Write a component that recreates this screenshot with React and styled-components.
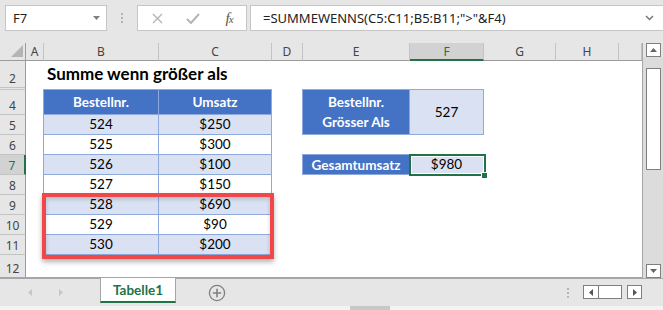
import React from 'react';
import styled, { createGlobalStyle, css } from 'styled-components';

const GREEN = '#217346';
const BLUE = '#4472c4';
const BAND = '#d9e1f2';
const LINE = '#8ea9db';
const CHROME = '#e6e6e6';

const GlobalStyle = createGlobalStyle`
  html, body { margin: 0; padding: 0; }
  body { background: ${CHROME}; font-family: "Noto Sans", sans-serif; }
`;

// grid row n == sheet row n (row 1 is hidden and folded into the header row)
const COLUMNS = ['A', 'B', 'C', 'D', 'E', 'F', 'G', 'H', ''];
const COL_WIDTHS = [26, 18, 115, 113, 31, 107, 74, 72, 63, 23];
const ROW_HEIGHTS = [18, 27, 2, 25, 20, 20, 20, 20, 20, 20, 20, 23];
const ROW_LABELS = [null, '2', '', '4', '5', '6', '7', '8', '9', '10', '11', '12'];

const orders = [
  { no: 524, sum: '$250' },
  { no: 525, sum: '$300' },
  { no: 526, sum: '$100' },
  { no: 527, sum: '$150' },
  { no: 528, sum: '$690' },
  { no: 529, sum: '$90' },
  { no: 530, sum: '$200' },
];

const Page = styled.div`
  width: 663px;
  height: 310px;
  display: flex;
  flex-direction: column;
  background: ${CHROME};
  overflow: hidden;
`;

/* ---------- formula bar ---------- */

const FormulaBar = styled.div`
  display: flex;
  height: 26px;
  margin: 5px 0 12px 5px;
`;

const Box = styled.div`
  box-sizing: border-box;
  background: #fff;
  border: 1px solid #c6c6c6;
  display: flex;
  align-items: center;
`;

const NameBox = styled(Box)`
  width: 102px;
  justify-content: space-between;
  padding: 0 6px 0 7px;
  font-size: 13px;
  color: #222;
`;

const Grip = styled.div`
  width: 30px;
  display: flex;
  flex-direction: column;
  align-items: center;
  justify-content: center;
  gap: 2px;

  i {
    width: 2px;
    height: 2px;
    background: #b4b4b4;
  }
`;

const FxGroup = styled(Box)`
  width: 110px;
  display: grid;
  grid-template-columns: repeat(3, 36px);
  justify-items: center;
  padding-left: 1px;
`;

const FxLabel = styled.span`
  font-family: "Liberation Serif", serif;
  font-style: italic;
  font-size: 15px;
  color: #555;
  letter-spacing: -1px;

  small { font-size: 11px; }
`;

const FormulaInput = styled(Box)`
  flex: 1;
  margin-left: 3px;
  border-right: none;
  justify-content: space-between;
  padding: 0 9px 0 12px;
  font-size: 13px;
  color: #222;
`;

/* ---------- sheet ---------- */

const SheetArea = styled.div`
  display: flex;
  height: 235px;
`;

const Grid = styled.div`
  display: grid;
  grid-template-columns: ${COL_WIDTHS.map(w => `${w}px`).join(' ')};
  grid-template-rows: ${ROW_HEIGHTS.map(h => `${h}px`).join(' ')};
  width: 643px;
  box-sizing: border-box;
  border-right: 1px solid #a6a6a6;
  border-bottom: 1px solid #a6a6a6;
  background: #fff;
  overflow: hidden;
`;

const Corner = styled.div`
  grid-column: 1;
  grid-row: 1;
  background: ${CHROME};
  border-right: 1px solid #9b9b9b;
  border-bottom: 1px solid #9b9b9b;
  display: flex;
  align-items: flex-end;
  justify-content: flex-end;
  padding: 0 2px 3px 0;
`;

const ColHead = styled.div`
  grid-row: 1;
  grid-column: ${p => p.$col};
  box-sizing: border-box;
  display: flex;
  align-items: center;
  justify-content: center;
  font-size: 12px;
  background: ${p => (p.$active ? '#d2d2d2' : CHROME)};
  color: ${p => (p.$active ? GREEN : '#444')};
  border-right: 1px solid #c3c3c3;
  border-bottom: ${p => (p.$active ? `2px solid ${GREEN}` : '1px solid #9b9b9b')};
`;

const RowHead = styled.div`
  grid-column: 1;
  grid-row: ${p => p.$row};
  box-sizing: border-box;
  overflow: hidden;
  display: flex;
  align-items: flex-end;
  justify-content: center;
  font-size: 12px;
  line-height: 16px;
  background: ${p => (p.$active ? '#d2d2d2' : CHROME)};
  color: ${p => (p.$active ? GREEN : '#444')};
  border-bottom: 1px solid #c3c3c3;
  border-right: ${p => (p.$active ? `2px solid ${GREEN}` : '1px solid #9b9b9b')};
`;

const Title = styled.div`
  grid-column: 3 / span 4;
  grid-row: 2;
  display: flex;
  align-items: flex-end;
  padding: 0 0 2px 3px;
  font-family: "Lato", sans-serif;
  font-weight: 700;
  font-size: 17px;
  line-height: 24px;
  color: #000;
`;

const Cell = styled.div`
  grid-column: ${p => p.$col};
  grid-row: ${p => p.$row} / span ${p => p.$rows || 1};
  margin: -1px 0 0 -1px;
  border: 1px solid ${LINE};
  display: flex;
  align-items: ${p => (p.$head ? 'center' : 'flex-end')};
  justify-content: center;
  text-align: center;
  font-family: "Lato", sans-serif;
  font-size: 13.5px;
  line-height: 19px;
  color: #000;
  background: ${p => (p.$head ? BLUE : p.$band ? BAND : '#fff')};
  ${p => p.$head && css`
    color: #fff;
    font-weight: 700;
    line-height: 20px;
  `}
`;

const Highlight = styled.div`
  grid-column: 3 / span 2;
  grid-row: 9 / span 3;
  margin: -2px -2px -4px -2px;
  border: 4px solid #f0474b;
  box-shadow: 0 3px 5px rgba(0, 0, 0, 0.3), inset 0 2px 4px rgba(0, 0, 0, 0.18);
  position: relative;
  z-index: 2;
  pointer-events: none;
`;

const Selection = styled.div`
  grid-column: 7;
  grid-row: 7;
  margin: -1px -2px -1px -1px;
  border: 2px solid ${GREEN};
  box-shadow: inset 0 0 0 1px #fff;
  position: relative;
  z-index: 3;

  &::after {
    content: '';
    position: absolute;
    right: -4px;
    bottom: -5px;
    width: 5px;
    height: 5px;
    background: ${GREEN};
    border: 1px solid #fff;
  }
`;

/* ---------- scroll bars ---------- */

const VScroll = styled.div`
  width: 20px;
  display: flex;
  flex-direction: column;
  background: #dcdcdc;
`;

const ScrollCap = styled.div`
  background: ${CHROME};
  padding: 0 2px 0 3px;
`;

const ScrollBtn = styled.div`
  box-sizing: border-box;
  width: ${p => p.$w || 15}px;
  height: ${p => p.$h || 14}px;
  background: #fff;
  border: 1px solid #7f7f7f;
  display: flex;
  align-items: center;
  justify-content: center;
`;

const VThumb = styled.div`
  box-sizing: border-box;
  height: 102px;
  margin: 11px 2px 0 3px;
  background: #fff;
  border: 1px solid #7f7f7f;
`;

const VTrackFill = styled.div`
  flex: 1;
`;

/* ---------- sheet tabs ---------- */

const TabBar = styled.div`
  display: flex;
  height: 28px;
  box-sizing: border-box;
  border-top: 1px solid #a6a6a6;
`;

const TabNav = styled.div`
  width: 100px;
  display: flex;
  align-items: center;
  padding-left: 27px;
  gap: 25px;
  box-sizing: border-box;
`;

const Tab = styled.div`
  width: 76px;
  margin: -1px 0 3px;
  box-sizing: border-box;
  background: #fff;
  border-left: 1px solid #a6a6a6;
  border-right: 1px solid #a6a6a6;
  border-bottom: 2px solid ${GREEN};
  display: flex;
  align-items: center;
  justify-content: center;
  padding-top: 1px;
  font-family: "Lato", sans-serif;
  font-weight: 700;
  font-size: 13.5px;
  color: ${GREEN};
`;

const AddSheet = styled.div`
  margin-left: 32px;
  display: flex;
  align-items: center;
`;

const Spacer = styled.div`
  flex: 1;
`;

const Dots = styled.div`
  display: flex;
  flex-direction: column;
  justify-content: center;
  gap: 2px;
  margin-right: 14px;

  i {
    width: 2px;
    height: 2px;
    background: #b4b4b4;
  }
`;

const HScroll = styled.div`
  display: flex;
  align-items: center;
  margin-right: 21px;
  padding-bottom: 1px;
`;

const HThumb = styled.div`
  box-sizing: border-box;
  width: 24px;
  height: 14px;
  margin-left: -1px;
  background: #fff;
  border: 1px solid #7f7f7f;
`;

const Footer = styled.div`
  flex: 1;
  background: #f3f3f3;
  display: flex;
  padding-left: 350px;

  i {
    width: 40px;
    background: #c8c8c8;
  }
`;

const Tri = ({ dir, color = '#555', size = 7 }) => {
  const pts = {
    up: '0,5 7,5 3.5,1',
    down: '0,1 7,1 3.5,5',
    left: '5,0 5,7 1,3.5',
    right: '1,0 1,7 5,3.5',
  }[dir];
  const vertical = dir === 'up' || dir === 'down';
  return (
    <svg width={vertical ? size : 6} height={vertical ? 6 : size} viewBox={vertical ? '0 0 7 6' : '0 0 6 7'}>
      <polygon points={pts} fill={color} />
    </svg>
  );
};

const Sheet = () => (
  <Grid>
    <Corner>
      <svg width="12" height="12" viewBox="0 0 12 12">
        <polygon points="12,0 12,12 0,12" fill="#b4b4b4" />
      </svg>
    </Corner>
    {COLUMNS.map((c, i) => (
      <ColHead key={i} $col={i + 2} $active={c === 'F'}>{c}</ColHead>
    ))}
    {ROW_LABELS.map((label, i) =>
      i === 0 ? null : (
        <RowHead key={i} $row={i + 1} $active={label === '7'}>{label}</RowHead>
      )
    )}

    <Title>Summe wenn größer als</Title>

    <Cell $col={3} $row={4} $head>Bestellnr.</Cell>
    <Cell $col={4} $row={4} $head>Umsatz</Cell>
    {orders.map((o, i) => (
      <React.Fragment key={o.no}>
        <Cell $col={3} $row={i + 5} $band={i % 2 === 0}>{o.no}</Cell>
        <Cell $col={4} $row={i + 5} $band={i % 2 === 0}>{o.sum}</Cell>
      </React.Fragment>
    ))}

    <Cell $col={6} $row={4} $rows={2} $head>Bestellnr.<br />Grösser Als</Cell>
    <Cell $col={7} $row={4} $rows={2} $band style={{ alignItems: 'center' }}>527</Cell>
    <Cell $col={6} $row={7} $head>Gesamtumsatz</Cell>
    <Cell $col={7} $row={7} $band>$980</Cell>

    <Highlight />
    <Selection />
  </Grid>
);

export default function App() {
  return (
    <Page>
      <GlobalStyle />
      <FormulaBar>
        <NameBox>
          <span>F7</span>
          <Tri dir="down" color="#808080" />
        </NameBox>
        <Grip><i /><i /><i /></Grip>
        <FxGroup>
          <svg width="11" height="11" viewBox="0 0 11 11">
            <path d="M1 1 L10 10 M10 1 L1 10" stroke="#b4b4b4" strokeWidth="1.4" />
          </svg>
          <svg width="14" height="11" viewBox="0 0 14 11">
            <path d="M1 6 L5 10 L13 1" stroke="#b4b4b4" strokeWidth="2" fill="none" />
          </svg>
          <FxLabel>f<small>x</small></FxLabel>
        </FxGroup>
        <FormulaInput>
          <span>=SUMMEWENNS(C5:C11;B5:B11;"&gt;"&amp;F4)</span>
          <svg width="9" height="6" viewBox="0 0 9 6">
            <path d="M1 1 L4.5 4.5 L8 1" stroke="#777" strokeWidth="1.5" fill="none" />
          </svg>
        </FormulaInput>
      </FormulaBar>

      <SheetArea>
        <Sheet />
        <VScroll>
          <ScrollCap>
            <ScrollBtn><Tri dir="up" color="#666" /></ScrollBtn>
          </ScrollCap>
          <VThumb />
          <VTrackFill />
          <ScrollCap style={{ background: 'transparent' }}>
            <ScrollBtn><Tri dir="down" color="#666" /></ScrollBtn>
          </ScrollCap>
        </VScroll>
      </SheetArea>

      <TabBar>
        <TabNav>
          <Tri dir="left" color="#c6c6c6" />
          <Tri dir="right" color="#c6c6c6" />
        </TabNav>
        <Tab>Tabelle1</Tab>
        <AddSheet>
          <svg width="18" height="18" viewBox="0 0 18 18">
            <circle cx="9" cy="9" r="7.6" stroke="#808080" strokeWidth="1.3" fill="none" />
            <path d="M9 4.8 V13.2 M4.8 9 H13.2" stroke="#808080" strokeWidth="1.6" />
          </svg>
        </AddSheet>
        <Spacer />
        <Dots><i /><i /><i /></Dots>
        <HScroll>
          <ScrollBtn $w={16}><Tri dir="left" color="#555" /></ScrollBtn>
          <HThumb />
          <ScrollBtn $w={15} style={{ marginLeft: 5 }}><Tri dir="right" color="#555" /></ScrollBtn>
        </HScroll>
      </TabBar>
      <Footer><i /></Footer>
    </Page>
  );
}
